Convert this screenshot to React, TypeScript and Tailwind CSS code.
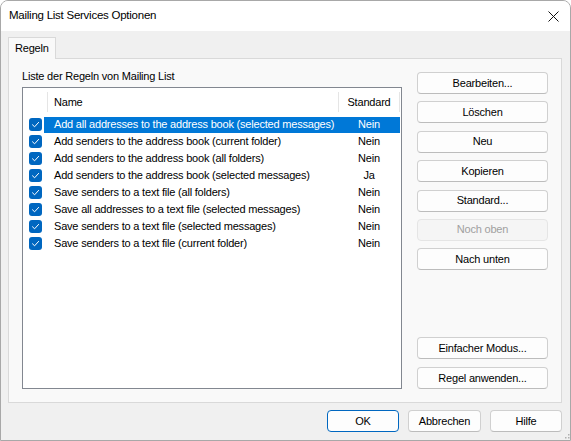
import React from 'react';

const RULES = [
  { name: 'Add all addresses to the address book (selected messages)', std: 'Nein' },
  { name: 'Add senders to the address book (current folder)', std: 'Nein' },
  { name: 'Add senders to the address book (all folders)', std: 'Nein' },
  { name: 'Add senders to the address book (selected messages)', std: 'Ja' },
  { name: 'Save senders to a text file (all folders)', std: 'Nein' },
  { name: 'Save all addresses to a text file (selected messages)', std: 'Nein' },
  { name: 'Save senders to a text file (selected messages)', std: 'Nein' },
  { name: 'Save senders to a text file (current folder)', std: 'Nein' },
];

const SIDE_TOP = ['Bearbeiten...', 'Löschen', 'Neu', 'Kopieren', 'Standard...', 'Noch oben', 'Nach unten'];

function Button({ label, disabled, primary, className = '' }: { label: string; disabled?: boolean; primary?: boolean; className?: string }) {
  let cls = 'bg-[#fdfdfd] border-[#d0d0d0] border-b-[#bcbcbc] text-black';
  if (disabled) cls = 'bg-[#f5f5f5] border-[#e5e5e5] text-[#a0a0a0]';
  if (primary) cls = 'bg-[#fdfdfd] border-[#0067c0] text-black';
  return (
    <div className={`h-[22px] flex items-center justify-center border rounded-[4px] leading-none ${cls} ${className}`}>
      {label}
    </div>
  );
}

function Check() {
  return (
    <div className="w-[13px] h-[13px] rounded-[3px] bg-[#0067c0] flex items-center justify-center">
      <svg width="9" height="9" viewBox="0 0 9 9" fill="none">
        <path d="M1.5 4.8 L3.6 6.8 L7.6 2.4" stroke="#fff" strokeWidth="1" strokeLinecap="round" strokeLinejoin="round" />
      </svg>
    </div>
  );
}

export default function App() {
  return (
    <div className="w-[571px] h-[441px] flex flex-col bg-[#f0f0f0] border border-[#a8a8a8] rounded-t-[8px] overflow-hidden text-black font-['Liberation_Sans',Arial,sans-serif] text-[11px] tracking-[-0.2px] select-none">
      {/* title bar */}
      <div className="h-[30px] shrink-0 bg-white flex items-center justify-between pl-[8px] pr-[11px]">
        <span className="text-[11.5px] tracking-[-0.25px]">Mailing List Services Optionen</span>
        <svg width="11" height="11" viewBox="0 0 11 11">
          <path d="M0.5 0.5 L10.5 10.5 M10.5 0.5 L0.5 10.5" stroke="#111" strokeWidth="1" />
        </svg>
      </div>

      <div className="flex-1 flex flex-col pl-[7px] pr-[8px] pt-[6px]">
        {/* tab strip */}
        <div className="flex h-[21px]">
          <div className="w-[48px] h-[22px] -mb-[1px] relative z-10 bg-[#f9f9f9] border border-b-0 border-[#d9d9d9] pl-[6px] flex items-center">
            Regeln
          </div>
        </div>

        {/* panel */}
        <div className="h-[345px] border border-[#d9d9d9] bg-[#f9f9f9] flex pl-[13px]">
          <div className="flex flex-col pt-[9px]">
            <div className="h-[16px] leading-[16px]">Liste der Regeln von Mailing List</div>
            <div className="mt-[3px] w-[380px] h-[302px] border border-[#828790] bg-white">
              {/* header */}
              <div className="flex h-[28px]">
                <div className="w-[25px] border-r border-[#e5e5e5] my-[4px]" />
                <div className="w-[291px] border-r border-[#e5e5e5] my-[4px] pl-[6px] flex items-center">Name</div>
                <div className="w-[61px] border-r border-[#e5e5e5] my-[4px] flex items-center justify-center">Standard</div>
              </div>
              {RULES.map((r, i) => (
                <div key={i} className="flex h-[17px] items-center">
                  <div className="w-[21px] flex justify-end pr-[2px]">
                    <Check />
                  </div>
                  <div className={`flex flex-1 h-[16px] items-center mr-[1px] ${i === 0 ? 'bg-[#0078d7] text-white' : ''}`}>
                    <div className="w-[294px] pl-[10px]">{r.name}</div>
                    <div className="flex-1 text-center">{r.std}</div>
                  </div>
                </div>
              ))}
            </div>
          </div>

          <div className="ml-[15px] w-[131px] flex flex-col pt-[13px] pb-[13px]">
            <div className="flex flex-col gap-[7.4px]">
              {SIDE_TOP.map(l => (
                <Button key={l} label={l} disabled={l === 'Noch oben'} />
              ))}
            </div>
            <div className="flex-1" />
            <div className="flex flex-col gap-[8px]">
              <Button label="Einfacher Modus..." />
              <Button label="Regel anwenden..." />
            </div>
          </div>
        </div>

        {/* dialog buttons */}
        <div className="flex justify-end gap-[9px] mt-[7px] relative">
          <Button label="OK" primary className="w-[72px]" />
          <Button label="Abbrechen" className="w-[73px]" />
          <Button label="Hilfe" className="w-[72px]" />
          <svg className="absolute right-[-8px] bottom-[-10px]" width="8" height="8" viewBox="0 0 8 8">
            <rect x="6" y="0" width="1.5" height="1.5" fill="#b0b0b0" />
            <rect x="3" y="3" width="1.5" height="1.5" fill="#b0b0b0" />
            <rect x="6" y="3" width="1.5" height="1.5" fill="#b0b0b0" />
            <rect x="0" y="6" width="1.5" height="1.5" fill="#b0b0b0" />
            <rect x="3" y="6" width="1.5" height="1.5" fill="#b0b0b0" />
            <rect x="6" y="6" width="1.5" height="1.5" fill="#b0b0b0" />
          </svg>
        </div>
      </div>
    </div>
  );
}
